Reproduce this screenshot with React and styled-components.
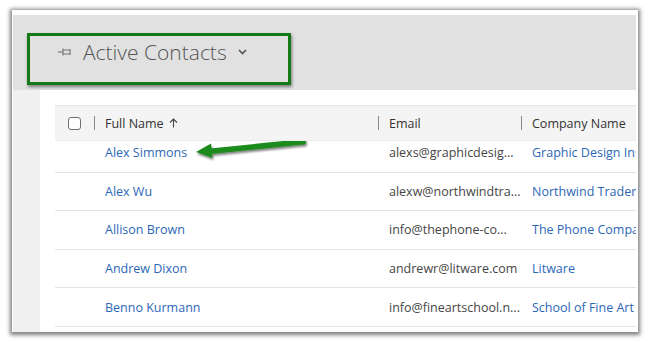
import React from "react";
import styled, { createGlobalStyle } from "styled-components";

const Global = createGlobalStyle`
  html, body { margin: 0; padding: 0; background: #ffffff; }
  body { font-family: "Open Sans", "Noto Sans", sans-serif; }
  * { box-sizing: border-box; }
`;

const Page = styled.div`
  width: 650px;
  height: 343px;
  padding: 10px 12px 0 12px;
  background: #fff;
  overflow: hidden;
`;

const Frame = styled.div`
  position: relative;
  width: 626px;
  height: 322px;
  background: #fff;
  padding: 5px 2px 0 1px;
  box-shadow: 0 1px 4px 2px rgba(0, 0, 0, 0.5);
  overflow: hidden;
  display: flex;
  flex-direction: column;
`;

const ViewHeader = styled.div`
  height: 75px;
  flex: none;
  background: #e1e1e1;
  display: flex;
  align-items: flex-start;
  padding: 23px 0 0 45px;
`;

const Title = styled.div`
  display: flex;
  align-items: center;
  color: #555;
  font-size: 21px;
  font-weight: 300;
  gap: 11px;
`;

const Chevron = styled.span`
  margin-left: 0;
  display: inline-flex;
`;

const Main = styled.div`
  flex: 1;
  display: flex;
  min-height: 0;
`;

const SideStrip = styled.div`
  width: 27px;
  flex: none;
  background: #f0f0f0;
`;

const Content = styled.div`
  flex: 1;
  background: #fff;
  padding: 15px 0 0 15px;
  min-width: 0;
  overflow: hidden;
`;

const Grid = styled.div`
  width: 700px;
  border-top: 1px solid #e6e6e6;
  display: flex;
  flex-direction: column;
  height: 100%;
`;

const cols = "39px 284px 143px 1fr";

const HeaderRow = styled.div`
  display: grid;
  grid-template-columns: ${cols};
  height: 35px;
  background: #f4f4f4;
  align-items: center;
  flex: none;
  position: relative;
  z-index: 1;
  border-bottom: 1px solid #ececec;
`;

const CheckCell = styled.div`
  display: flex;
  justify-content: flex-end;
  padding-right: 13px;
`;

const CheckBox = styled.span`
  width: 13px;
  height: 13px;
  border: 1.5px solid #707070;
  border-radius: 3px;
  background: #fff;
`;

const HeadCell = styled.div`
  display: flex;
  align-items: center;
  height: 14px;
  border-left: 1px solid #8a8a8a;
  padding-left: 10px;
  font-size: 12.5px;
  color: #333;
  gap: 5px;
`;

const Body = styled.div`
  flex: 1;
  overflow: hidden;
`;

const Rows = styled.div`
  margin-top: -7px;
`;

const Row = styled.div`
  display: grid;
  grid-template-columns: ${cols};
  height: 38.6px;
  align-items: center;
  border-bottom: 1px solid #e3e3e3;
  font-size: 12.5px;
`;

const Cell = styled.div`
  padding-left: 11px;
  color: ${(p) => (p.$link ? "#2d67b8" : "#454545")};
  white-space: nowrap;
  overflow: hidden;
`;

const Highlight = styled.div`
  position: absolute;
  left: 15px;
  top: 23px;
  width: 264px;
  height: 52px;
  border: 3px solid #157a15;
  box-shadow: 1px 2px 3px rgba(0, 0, 0, 0.45);
  pointer-events: none;
`;

const ArrowSvg = styled.svg`
  position: absolute;
  left: 168px;
  top: 115px;
  pointer-events: none;
`;

const data = [
  ["Alex Simmons", "alexs@graphicdesig...", "Graphic Design Institute"],
  ["Alex Wu", "alexw@northwindtra...", "Northwind Traders"],
  ["Allison Brown", "info@thephone-co...", "The Phone Company"],
  ["Andrew Dixon", "andrewr@litware.com", "Litware"],
  ["Benno Kurmann", "info@fineartschool.n...", "School of Fine Art"],
  ["Brian Johnson", "info@example.com", "Contoso"],
];

export default function App() {
  return (
    <Page>
      <Global />
      <Frame>
        <ViewHeader>
          <Title>
            <svg width="14" height="10" viewBox="0 0 14 10">
              <path d="M0 5 H5" stroke="#777" strokeWidth="1.2" />
              <path d="M5 1.5 V8.5 M5 3 H12 V7 H5 M12 2 V8" stroke="#777" strokeWidth="1.2" fill="none" />
            </svg>
            <span>Active Contacts</span>
            <Chevron>
              <svg width="9" height="6" viewBox="0 0 9 6">
                <path d="M1 1 L4.5 4.5 L8 1" stroke="#555" strokeWidth="1.6" fill="none" />
              </svg>
            </Chevron>
          </Title>
        </ViewHeader>
        <Main>
          <SideStrip />
          <Content>
            <Grid>
              <HeaderRow>
                <CheckCell>
                  <CheckBox />
                </CheckCell>
                <HeadCell>
                  Full Name
                  <svg width="9" height="10" viewBox="0 0 9 10">
                    <path d="M4.5 1 V9.5 M1 4.5 L4.5 1 L8 4.5" stroke="#444" strokeWidth="1.1" fill="none" />
                  </svg>
                </HeadCell>
                <HeadCell>Email</HeadCell>
                <HeadCell>Company Name</HeadCell>
              </HeaderRow>
              <Body>
                <Rows>
                  {data.map((r) => (
                    <Row key={r[0]}>
                      <span />
                      <Cell $link>{r[0]}</Cell>
                      <Cell>{r[1]}</Cell>
                      <Cell $link>{r[2]}</Cell>
                    </Row>
                  ))}
                </Rows>
              </Body>
            </Grid>
          </Content>
        </Main>
        <Highlight />
        <ArrowSvg width="140" height="45" viewBox="0 0 140 45">
          <defs>
            <filter id="sh" x="-20%" y="-50%" width="140%" height="200%">
              <feDropShadow dx="1" dy="2" stdDeviation="1.2" floodColor="#000" floodOpacity="0.5" />
            </filter>
          </defs>
          <g filter="url(#sh)">
            <path d="M30 23.5 L123 14 L123.6 19.6 L30.6 29.1 Z" fill="#1c8a1c" />
            <path d="M16 27 L31 18.5 L32.5 33 Z" fill="#1c8a1c" />
            <circle cx="123.3" cy="16.8" r="2.8" fill="#1c8a1c" />
          </g>
        </ArrowSvg>
      </Frame>
    </Page>
  );
}
